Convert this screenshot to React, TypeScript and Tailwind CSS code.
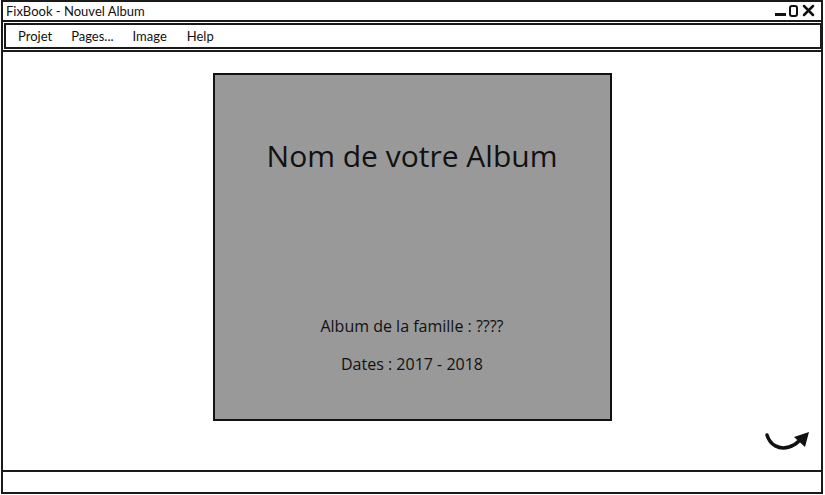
import React from "react"

function WindowControls() {
  return (
    <svg width="44" height="14" viewBox="0 0 44 14" className="mr-[3px]">
      <rect x="1" y="9" width="11" height="3" fill="#111" />
      <rect x="16" y="2" width="7" height="10" rx="2" fill="none" stroke="#111" strokeWidth="2" />
      <path d="M30 2 L39 11 M39 2 L30 11" stroke="#111" strokeWidth="2.5" strokeLinecap="round" />
    </svg>
  )
}

function RedoArrow() {
  return (
    <svg width="50" height="28" viewBox="0 0 50 28">
      <path
        d="M4 7 C 7 17, 16 22, 26 19 C 30 18, 33 16, 36 13"
        fill="none"
        stroke="#111"
        strokeWidth="3.5"
        strokeLinecap="round"
      />
      <polygon points="46,4 31,9 42,19" fill="#111" />
    </svg>
  )
}

export default function App() {
  return (
    <div
      className="w-[825px] h-[495px] bg-white overflow-hidden"
      style={{ fontFamily: "Lato, 'Open Sans', sans-serif" }}
    >
      <div className="ml-[1px] w-[822px] h-[494px] border-2 border-[#1a1a1a] flex flex-col text-[#111]">
        <div className="h-[20px] border-b-2 border-[#1a1a1a] flex items-center justify-between pl-[3px]">
          <span className="text-[13px] leading-none">FixBook - Nouvel Album</span>
          <WindowControls />
        </div>

        <div className="mt-[1px] ml-[1px] mr-[-1px] h-[26px] border-2 border-[#1a1a1a] flex items-center">
          <div className="flex text-[13px] leading-none">
            <span className="ml-[12px]">Projet</span>
            <span className="ml-[19px]">Pages...</span>
            <span className="ml-[19px]">Image</span>
            <span className="ml-[20px]">Help</span>
          </div>
        </div>

        <div className="mt-[1px] flex-1 border-t-2 border-[#1a1a1a] relative">
          <div className="flex justify-center pt-[21px]">
            <div
              className="w-[399px] h-[348px] bg-[#999999] border-2 border-[#111] flex flex-col items-center"
              style={{ fontFamily: "'Open Sans', Lato, sans-serif" }}
            >
              <div className="mt-[66px] text-[30px] leading-none">Nom de votre Album</div>
              <div className="mt-[147px] text-[16px] leading-none">Album de la famille : ????</div>
              <div className="mt-[22px] text-[16px] leading-none">Dates : 2017 - 2018</div>
            </div>
          </div>
          <div className="absolute right-[8px] bottom-[14px]">
            <RedoArrow />
          </div>
        </div>

        <div className="h-[22px] border-t-2 border-[#1a1a1a]" />
      </div>
    </div>
  )
}
